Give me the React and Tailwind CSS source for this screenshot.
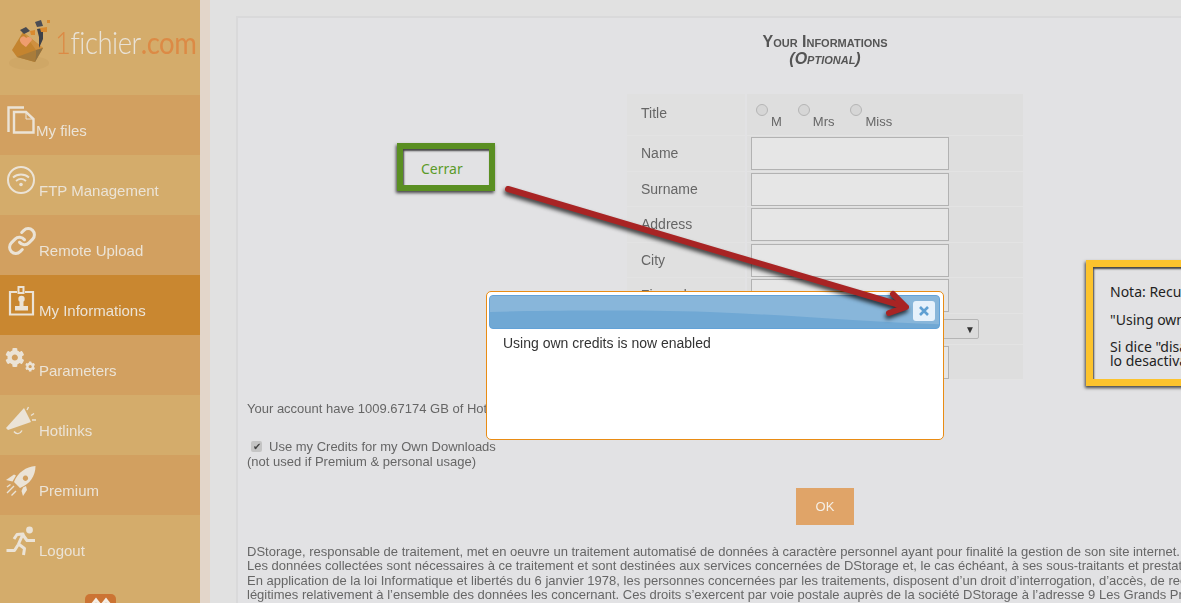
import { FaCog } from "react-icons/fa";
import { Link } from "lucide-react";

function FilesIcon() {
  return (
    <svg width="28" height="28" viewBox="0 0 28 28" fill="none" stroke="currentColor" strokeWidth="2.4">
      <path d="M1.5 26V1.5H17" />
      <path d="M7 6H19L26.5 13V26.5H7Z" />
      <path d="M19 6V13H26.5" strokeWidth="1" />
    </svg>
  );
}

function WifiIcon() {
  return (
    <svg width="28" height="28" viewBox="0 0 28 28" fill="none" stroke="currentColor">
      <circle cx="14" cy="14" r="13" strokeWidth="2" />
      <path d="M6 11.5C10.5 7.5 17.5 7.5 22 11.5" strokeWidth="1.8" />
      <path d="M9 15C12 12.5 16 12.5 19 15" strokeWidth="1.8" />
      <circle cx="14" cy="18.5" r="1.8" fill="currentColor" stroke="none" />
    </svg>
  );
}

function BadgeIcon() {
  return (
    <svg width="28" height="32" viewBox="0 0 28 32" fill="none" stroke="currentColor">
      <path d="M10 6H3V28.5H26V6H18" strokeWidth="2.2" />
      <rect x="11.5" y="1" width="5" height="6" strokeWidth="2" />
      <circle cx="14.5" cy="13" r="3.2" fill="currentColor" stroke="none" />
      <path d="M12.5 16H16.5V20H21V24.5H8V20H12.5Z" fill="currentColor" stroke="none" />
    </svg>
  );
}

function GearsIcon() {
  return (
    <div className="-ml-[2px] flex items-start">
      <FaCog size={21} className="mt-[1px]" />
      <FaCog size={11} className="mt-[15px]" />
    </div>
  );
}

function HornIcon() {
  return (
    <svg width="30" height="30" viewBox="0 0 30 30" className="-ml-px overflow-visible">
      <path d="M0 22L18 2L25 16L2 24Z" fill="currentColor" />
      <path d="M8 25.5C10 28.5 14 28.5 16 24.5" fill="none" stroke="currentColor" strokeWidth="1.4" />
      <path d="M21 4L22.5 1M25 9.5L28 7.5M26 14H30" fill="none" stroke="currentColor" strokeWidth="1.4" />
    </svg>
  );
}

function RocketIcon() {
  return (
    <svg width="30" height="30" viewBox="0 0 30 30" className="-ml-px">
      <path
        fillRule="evenodd"
        d="M29.5 0C20 1 12 6 8 16L14 22C24 18 29.5 10 29.5 0ZM19.5 9.5A2.7 2.7 0 1 1 19.4 9.5Z"
        fill="currentColor"
      />
      <path d="M0 14L8 8.5L10 9.5L6.5 15.5Z" fill="currentColor" />
      <path d="M17 21.5L20 20L21 24L17 30L15.5 25Z" fill="currentColor" />
      <path d="M1 27L8 20M5.5 29.5L10 25M1 21L4.5 18.5" fill="none" stroke="currentColor" strokeWidth="1.4" />
    </svg>
  );
}

function RunnerIcon() {
  return (
    <svg width="30" height="30" viewBox="0 0 30 30" className="-ml-px" fill="none" stroke="currentColor" strokeWidth="3" strokeLinejoin="round">
      <circle cx="23.5" cy="4" r="3.4" fill="currentColor" stroke="none" />
      <path d="M8 13L11 8.5L17 8L12.5 18L18.5 22.5L17.5 29" />
      <path d="M17 9L21 14.5L29 14.5" />
      <path d="M12 19L8.5 24.5L0.5 24.5" />
    </svg>
  );
}

function LogoCube() {
  return (
    <svg width="46" height="56" viewBox="0 0 46 56" className="shrink-0 overflow-visible">
      <ellipse cx="20" cy="44" rx="20" ry="7" fill="#cfa766" />
      <path d="M3 31L14 13L34 29L26 43L8 38Z" fill="#c4842f" />
      <path d="M14 13L34 29L27 31Z" fill="#cf9040" />
      <path d="M27 31L34 29L26 43Z" fill="#8f7243" />
      <path d="M8 38L27 31L26 43Z" fill="#a97c3a" />
      <path d="M11 20C13 16 16 17 17 19C19 17 23 18 23 21L17 28C14 26 10 23 11 20Z" fill="#ef9d6e" />
      <path d="M11 11L17 8L21 12L15 15Z" fill="#484a50" />
      <path d="M28 10L34 9L34 20L30 29L30 18Z" fill="#3d4048" />
      <path d="M26 3L32 1L34 7L28 8Z" fill="#4a4c54" />
      <path d="M21 12L26 11L26 16L22 16Z" fill="#d9892e" />
      <path d="M31 9L38 8L38 13L32 13Z" fill="#d9892e" />
      <path d="M38 1L41 1L41 4L38 4Z" fill="#d9892e" />
    </svg>
  );
}

const menu = [
  { label: "My files", icon: <FilesIcon />, bg: "bg-[#d2a060]", gap: "ml-px" },
  { label: "FTP Management", icon: <WifiIcon />, bg: "bg-[#d4ac6b]", gap: "ml-1" },
  { label: "Remote Upload", icon: <Link size={30} strokeWidth={2.4} />, bg: "bg-[#d2a060]", gap: "ml-1" },
  { label: "My Informations", icon: <BadgeIcon />, bg: "bg-[#c98730]", gap: "ml-1" },
  { label: "Parameters", icon: <GearsIcon />, bg: "bg-[#d2a060]", gap: "ml-1" },
  { label: "Hotlinks", icon: <HornIcon />, bg: "bg-[#d4ac6b]", gap: "ml-1" },
  { label: "Premium", icon: <RocketIcon />, bg: "bg-[#d2a060]", gap: "ml-1" },
  { label: "Logout", icon: <RunnerIcon />, bg: "bg-[#d4ac6b]", gap: "ml-1" },
];

function Sidebar() {
  return (
    <aside className="w-[200px] shrink-0 bg-[#d4ac6b] text-[#ebe3d6] font-['Liberation_Sans',sans-serif]">
      <div className="flex h-[95px] items-start pl-[9px] pt-[19px]">
        <LogoCube />
        <div className="mt-[5px] origin-top scale-y-[1.15] whitespace-nowrap font-['Lato',sans-serif] text-[27.5px] font-light leading-[32px] tracking-[-0.5px]">
          <span className="text-[#dc8a45]">1</span>
          <span className="text-[#e9e2d6]">fichier</span>
          <span className="text-[#dc8a45] font-normal">.com</span>
        </div>
      </div>
      {menu.map((item) => (
        <div key={item.label} className={`flex h-[60px] items-start pl-[7px] pt-[11px] ${item.bg}`}>
          <div className="w-[28px] shrink-0">{item.icon}</div>
          <span className={`mt-[16px] whitespace-nowrap text-[15px] leading-[17px] ${item.gap}`}>{item.label}</span>
        </div>
      ))}
      <div className="ml-[85px] mt-[19px] flex h-[20px] w-[31px] justify-center gap-px rounded-t-[5px] bg-[#cc7433] pt-[3px]">
        <svg width="22" height="8" viewBox="0 0 22 8" fill="none" stroke="#f5eee4" strokeWidth="3">
          <path d="M2 8L6 3L10 8" />
          <path d="M12 8L16 3L20 8" />
        </svg>
      </div>
    </aside>
  );
}

const rowLeft = "flex items-center bg-[#e0e0e0] pl-[14px] border-b border-[#e3e3e3]";
const rowRight = "flex items-center bg-[#dedede] pl-[4px] border-b border-[#e3e3e3]";
const field = "h-[33px] w-[198px] border border-[#b2b2b2] bg-[#e6e6e6]";

function Radio({ label, labelClass }) {
  return (
    <label className="flex items-start">
      <input type="radio" name="civility" className="mt-[10px] h-[12px] w-[12px] appearance-none rounded-full border border-[#b5b5b5] bg-[#d6d6d6]" />
      <span className={`mt-[20px] ml-[3px] text-[13px] leading-[15px] ${labelClass}`}>{label}</span>
    </label>
  );
}

function FormTable() {
  const rows = [
    { label: "Name", h: "h-[36px]" },
    { label: "Surname", h: "h-[35px]" },
    { label: "Address", h: "h-[36px]" },
    { label: "City", h: "h-[35px]" },
    { label: "Zip code", h: "h-[36px]" },
  ];
  return (
    <div className="mx-auto mt-[27px] grid w-[396px] grid-cols-[118px_276px] gap-x-[2px] text-[14px] text-[#666]">
      <div className={`h-[42px] pb-[3px] ${rowLeft}`}>Title</div>
      <div className={`h-[42px] ${rowRight} !items-start !pl-[9px]`}>
        <Radio label="M" labelClass="mr-[16px]" />
        <Radio label="Mrs" labelClass="mr-[15px]" />
        <Radio label="Miss" labelClass="ml-[4px]" />
      </div>
      {rows.map((row) => (
        <div key={row.label} className="contents">
          <div className={`${row.h} ${rowLeft}`}>{row.label}</div>
          <div className={`${row.h} ${rowRight}`}><div className={field} /></div>
        </div>
      ))}
      <div className={`h-[31px] ${rowLeft}`}>Country</div>
      <div className={`h-[31px] ${rowRight}`}>
        <div className="flex h-[20px] w-[228px] items-center justify-end rounded-[2px] border border-[#b5b5b5] bg-[#dcdcdc] pr-[3px] text-[10px] text-[#333]">▼</div>
      </div>
      <div className={`h-[35px] ${rowLeft}`}>Phone</div>
      <div className={`h-[35px] ${rowRight}`}><div className={field} /></div>
    </div>
  );
}

function MainPanel() {
  return (
    <main className="min-w-0 flex-1 bg-[#e1e1e1] pl-[26px] pt-[16px]">
      <div className="h-[600px] w-[1176px] border-l-2 border-t-2 border-[#d9d9da] bg-[#e2e2e4] font-['Liberation_Sans',sans-serif] text-[#666]">
        <div className="pt-[15px] text-center text-[16px] font-bold leading-[17px] text-[#555] [font-variant:small-caps]">
          <div>Your Informations</div>
          <div className="italic">(Optional)</div>
        </div>
        <FormTable />
        <div className="pl-[9px] text-[13px] leading-[15px]">
          <p className="mt-[21px] whitespace-nowrap">Your account have 1009.67174 GB of Hotlinks credits available.</p>
          <div className="mt-[23px] flex items-center pl-[4px]">
            <span className="flex h-[11px] w-[11px] items-center justify-center rounded-[2px] bg-[#c4c4c4] text-[10px] leading-none text-[#444]">✔</span>
            <span className="ml-[7px]">Use my Credits for my Own Downloads</span>
          </div>
          <p>(not used if Premium &amp; personal usage)</p>
        </div>
        <button className="mx-auto mt-[19px] block h-[37px] w-[58px] bg-[#e0a468] text-[13px] text-[#f5efe6]">OK</button>
        <div className="mt-[20px] whitespace-nowrap pl-[9px] text-[13px] leading-[14.4px]">
          <p>DStorage, responsable de traitement, met en oeuvre un traitement automatisé de données à caractère personnel ayant pour finalité la gestion de son site internet. Les informations recueillies</p>
          <p>Les données collectées sont nécessaires à ce traitement et sont destinées aux services concernées de DStorage et, le cas échéant, à ses sous-traitants et prestataires.</p>
          <p>En application de la loi Informatique et libertés du 6 janvier 1978, les personnes concernées par les traitements, disposent d’un droit d’interrogation, d’accès, de rectification</p>
          <p>légitimes relativement à l’ensemble des données les concernant. Ces droits s’exercent par voie postale auprès de la société DStorage à l’adresse 9 Les Grands Prés</p>
        </div>
      </div>
    </main>
  );
}

function Modal() {
  return (
    <div className="absolute left-[486px] top-[291px] h-[149px] w-[458px] rounded-[5px] border border-[#e98c14] bg-white pl-[2px] pr-[3px] pt-[3px] font-['Liberation_Sans',sans-serif]">
      <div className="relative h-[34px] overflow-hidden rounded-[4px] border border-[#62a2d8] bg-[#70a8d4]">
        <svg className="absolute inset-0 h-full w-full" viewBox="0 0 450 34" preserveAspectRatio="none">
          <path d="M0 0H450V30C380 28 300 20 220 17C150 15 60 15 0 17Z" fill="#88b6da" />
        </svg>
        <div className="absolute right-[4px] top-[5px] flex h-[20px] w-[22px] items-center justify-center rounded-[3px] bg-[#e6f1fb]">
          <svg width="10" height="10" viewBox="0 0 10 10" stroke="#5f9fd2" strokeWidth="2.6" fill="none">
            <path d="M1 1L9 9M9 1L1 9" />
          </svg>
        </div>
      </div>
      <p className="ml-[14px] mt-[6px] text-[14px] leading-[16px] text-[#333]">Using own credits is now enabled</p>
    </div>
  );
}

function Annotations() {
  return (
    <>
      <div className="absolute left-[397px] top-[143px] flex h-[48px] w-[98px] items-center border-[6px] border-[#5a8f22] bg-[#e2e2e4] pl-[18px] pt-[2px] font-['Noto_Sans',sans-serif] text-[14px] text-[#5a9a28] shadow-[-1px_2px_3px_rgba(0,0,0,0.7),inset_1px_2px_2px_rgba(0,0,0,0.7)]">
        Cerrar
      </div>
      <div className="absolute left-[1086px] top-[260px] h-[126px] w-[300px] border-[7px] border-[#fcc32d] bg-[#e2e2e4] pl-[17px] pt-[18px] font-['Noto_Sans',sans-serif] text-[14px] leading-[14px] whitespace-nowrap text-[#222] shadow-[-1px_2px_3px_rgba(0,0,0,0.7),inset_1px_2px_2px_rgba(0,0,0,0.7)]">
        <p>Nota: Recuerda que debe decir</p>
        <p className="mt-[14px]">"Using own credits is now enabled"</p>
        <p className="mt-[13px]">Si dice "disabled" es porque</p>
        <p>lo desactivaste</p>
      </div>
      <svg className="pointer-events-none absolute left-0 top-0 drop-shadow-[-1px_3px_2px_rgba(0,0,0,0.75)]" width="1181" height="603" fill="none" stroke="#a82424" strokeWidth="6" strokeLinecap="round" strokeLinejoin="round">
        <path d="M508 189L903 306" />
        <path d="M893 294L906 307L889 313" />
      </svg>
    </>
  );
}

export default function App() {
  return (
    <div className="relative h-[603px] w-[1181px] overflow-hidden bg-[#e1e1e1]">
      <div className="flex h-full blur-[0.5px]">
        <Sidebar />
        <div className="w-[10px] shrink-0 bg-[#e3d6ca]" />
        <MainPanel />
        <Modal />
      </div>
      <Annotations />
    </div>
  );
}
